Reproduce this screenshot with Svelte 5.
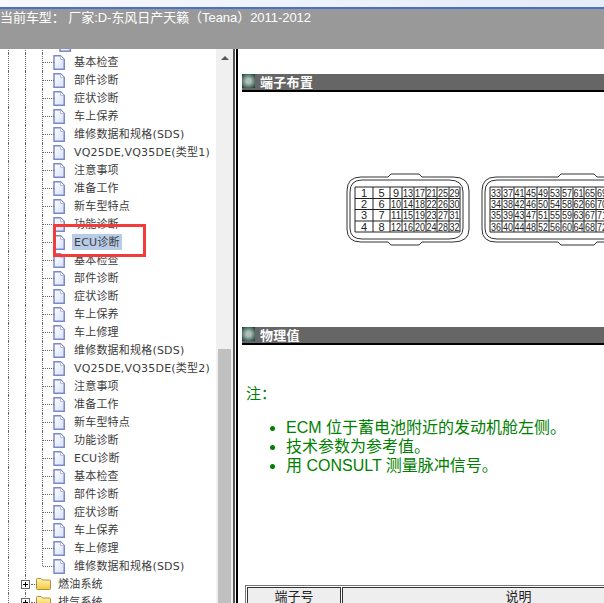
<script lang="ts">
	// one service-manual tree, scrolled part way down
	const section = ['注意事项', '准备工作', '新车型特点', '功能诊断', 'ECU诊断', '基本检查', '部件诊断', '症状诊断', '车上保养'];
	const docs = [
		'基本检查', '部件诊断', '症状诊断', '车上保养', '维修数据和规格(SDS)',
		'VQ25DE,VQ35DE(类型1)',
		...section,
		'车上修理', '维修数据和规格(SDS)',
		'VQ25DE,VQ35DE(类型2)',
		...section,
		'车上修理', '维修数据和规格(SDS)'
	];
	const selected = 10;
	const folders = ['燃油系统', '排气系统'];

	const cols1 = [355, 373, 390, 402, 414, 426, 437, 449, 460];
	const cols2 = [490, 502, 514, 525, 537, 549, 561, 573, 584, 596, 608];
	const rowY = [187, 198.5, 209.5, 221, 232];

	function pin(col: number, row: number, first: number) {
		return first + col * 4 + row;
	}
</script>

{#snippet page()}
	<svg class="page" viewBox="0 0 12 15">
		<path d="M1 .75h6.500l3.750 3.750v9.750h-10.250z" fill="url(#page-fill)" stroke="#7c88c8" stroke-width="1.500" />
		<path d="M7.500 1v3.500h3.500" fill="#fff" stroke="#a8b0dc" stroke-width="0.800" />
	</svg>
{/snippet}

<div class="window">
	<svg class="defs" width="0" height="0">
		<defs>
			<linearGradient id="page-fill" x1="0" y1="0" x2="1" y2="1">
				<stop offset="0" stop-color="#ffffff" />
				<stop offset="1" stop-color="#d4e0fa" />
			</linearGradient>
			<linearGradient id="folder-fill" x1="0" y1="0" x2="0" y2="1">
				<stop offset="0" stop-color="#fff6b8" />
				<stop offset="1" stop-color="#f4c83c" />
			</linearGradient>
		</defs>
	</svg>
	<div class="title-strip"></div>
	<div class="car-bar">当前车型： 厂家:D-东风日产天籁（Teana）2011-2012</div>

	<div class="main">
		<div class="tree-pane">
			<div class="tree">
				<div class="row doc">
					<span class="guide"></span><span class="guide"></span><span class="guide"></span>
					{@render page()}
				</div>
				{#each docs as label, i}
					<div class="row doc">
						<span class="guide"></span>
						<span class="guide"></span>
						<span class="guide branch" class:last={i === docs.length - 1}></span>
						{@render page()}
						<span class="label" class:selected={i === selected}>{label}</span>
					</div>
				{/each}
				{#each folders as label}
					<div class="row folder">
						<span class="guide"></span>
						<span class="guide plus-cell">
							<span class="plus"></span>
						</span>
						<svg class="folder-icon" viewBox="0 0 15 12">
							<path d="M.5 10.500v-9q0-1 1-1h3.500l1.500 1.500h7q1 0 1 1v7.500q0 1-1 1h-12q-1 0-1-1z" fill="url(#folder-fill)" stroke="#b09038" />
						</svg>
						<span class="label">{label}</span>
					</div>
				{/each}
			</div>
			<div class="marker"></div>
			<div class="scrollbar">
				<span class="arrow"></span>
				<div class="thumb"></div>
			</div>
		</div>

		<div class="divider"></div>

		<div class="content">
			<div class="heading first">
				<span class="bulb"></span>端子布置
			</div>

			<div class="connectors">
				<svg width="367" height="80" viewBox="341 170 367 80">
					<g fill="none" stroke="#333" stroke-width="1">
						<path d="M361 177h27l3-3h28l3 3h31q16 0 16 14v38q0 13-16 13h-31l-3 3h-28l-3-3h-27q-14 0-14-13v-38q0-14 14-14z" />
						<path d="M362 180h87q14 0 14 12v36q0 11-14 11h-87q-12 0-12-11v-36q0-12 12-12z" />
						<path d="M496 177h62l3-3h33l3 3h20v65h-20l-3 3h-33l-3-3h-62q-14 0-14-13v-38q0-14 14-14z" />
						<path d="M497 180h120v59h-120q-12 0-12-11v-36q0-12 12-12z" />
					</g>
					{#each [cols1, cols2] as cols, c}
						<g stroke="#222" stroke-width="1">
							{#each cols as x}<line x1={x} x2={x} y1="187" y2="232" />{/each}
							{#each rowY as y}<line x1={cols[0]} x2={cols[cols.length - 1]} y1={y} y2={y} />{/each}
						</g>
						{#each cols.slice(0, -1) as x, col}
							{#each rowY.slice(0, -1) as y, row}
								{@const n = pin(col, row, c === 0 ? 1 : 33)}
								<text
									class="pin"
									x={(x + cols[col + 1]) / 2}
									y={y + 9.500}
									textLength={n > 9 ? 10 : undefined}
									lengthAdjust="spacingAndGlyphs"
								>{n}</text>
							{/each}
						{/each}
					{/each}
				</svg>
			</div>

			<div class="heading">
				<span class="bulb"></span>物理值
			</div>

			<p class="note">注：</p>
			<ul class="notes">
				<li>ECM 位于蓄电池附近的发动机舱左侧。</li>
				<li>技术参数为参考值。</li>
				<li>用 CONSULT 测量脉冲信号。</li>
			</ul>

			<table class="pins">
				<thead>
					<tr><th class="no">端子号</th><th class="desc">说明</th></tr>
				</thead>
			</table>
		</div>
	</div>
</div>

<style>
	:global(body) {
		margin: 0;
		overflow: hidden;
	}

	.window {
		position: relative;
		width: 604px;
		height: 603px;
		display: flex;
		flex-direction: column;
		overflow: hidden;
		background: #fff;
		font-family: 'Liberation Sans', 'Noto Sans CJK SC', sans-serif;
	}

	.defs {
		position: absolute;
	}

	.title-strip {
		height: 7px;
		flex-shrink: 0;
		background: linear-gradient(90deg, #f8f8fc, #e4ecf8);
		border-bottom: 2px solid #4a70c8;
	}

	.car-bar {
		height: 40px;
		flex-shrink: 0;
		background: #999;
		color: #fff;
		font-size: 13px;
		line-height: 18px;
		letter-spacing: -0.05px;
		white-space: nowrap;
	}

	.main {
		flex: 1;
		display: flex;
		min-height: 0;
	}

	.tree-pane {
		position: relative;
		width: 233px;
		flex-shrink: 0;
		display: flex;
		overflow: hidden;
	}

	.tree {
		flex: 1;
		margin-top: -14px;
		min-width: 0;
	}

	.row {
		height: 18px;
		display: flex;
		align-items: center;
		white-space: nowrap;
	}

	.guide {
		align-self: stretch;
		width: 17px;
		box-sizing: border-box;
		border-left: 1px dotted #666;
		flex-shrink: 0;
	}

	.guide:first-child {
		margin-left: 8px;
	}

	.guide.branch {
		width: 11px;
		position: relative;
	}

	.guide.branch::after {
		content: '';
		position: absolute;
		left: 0;
		top: 9px;
		width: 11px;
		border-top: 1px dotted #666;
	}

	/* last child: the vertical line stops at the branch */
	.guide.last {
		border-left-color: transparent;
	}

	.guide.last::before {
		content: '';
		position: absolute;
		left: -1px;
		top: 0;
		height: 9px;
		border-left: 1px dotted #666;
	}

	.page {
		width: 12px;
		height: 15px;
		flex-shrink: 0;
	}

	.label {
		margin-left: 8px;
		padding: 1px 1px 0;
		color: #3c3c3c;
		font-size: 11px;
		line-height: 15px;
		letter-spacing: 0.2px;
		font-family: 'DejaVu Sans', 'Noto Sans CJK SC', sans-serif;
	}

	.label.selected {
		background: #b8cce8;
		padding: 1px 2px 0;
		margin-left: 7px;
	}

	.folder .label {
		margin-left: 6px;
	}

	.plus-cell {
		position: relative;
		display: flex;
		align-items: center;
		width: 11px;
	}

	.plus-cell::after {
		content: '';
		position: absolute;
		left: 5px;
		top: 9px;
		width: 6px;
		border-top: 1px dotted #666;
	}

	.plus {
		position: relative;
		z-index: 1;
		width: 9px;
		height: 9px;
		box-sizing: border-box;
		margin-left: -5px;
		border: 1px solid #666;
		background:
			linear-gradient(#000 0 0) center / 5px 1px no-repeat,
			linear-gradient(#000 0 0) center / 1px 5px no-repeat,
			#fff;
	}

	.folder-icon {
		width: 15px;
		height: 12px;
		flex-shrink: 0;
	}

	.marker {
		position: absolute;
		left: 53px;
		top: 175px;
		width: 93px;
		height: 33px;
		box-sizing: border-box;
		border: 3px solid #f33b3b;
	}

	.scrollbar {
		width: 17px;
		flex-shrink: 0;
		background: #f0f0f0;
		display: flex;
		flex-direction: column;
		align-items: center;
	}

	.arrow {
		margin-top: 7px;
		border: 4px solid transparent;
		border-top: 0;
		border-bottom: 4px solid #555;
	}

	.thumb {
		width: 13px;
		margin-top: 289px;
		flex: 1;
		background: #c0c0c0;
	}

	.divider {
		width: 2px;
		flex-shrink: 0;
		margin-right: 1px;
		background: #555;
		box-shadow: 3px 0 0 #000;
	}

	.content {
		flex: 1;
		min-width: 0;
		overflow: hidden;
		margin-left: 2px;
		padding-left: 4px;
	}

	.heading {
		height: 16px;
		display: flex;
		align-items: flex-start;
		gap: 5px;
		background: #666;
		border-bottom: 2px solid #000;
		color: #fff;
		font-size: 13px;
		font-weight: 700;
		letter-spacing: 0.3px;
		line-height: 15px;
		font-family: 'Noto Sans CJK SC', sans-serif;
	}

	.heading.first {
		margin-top: 25px;
	}

	.bulb {
		width: 13px;
		height: 14px;
		flex-shrink: 0;
		background: radial-gradient(circle, #b4bcb8 0 25%, #5c8278 60%, #16302c 100%);
	}

	.connectors {
		height: 235px;
		padding-top: 78px;
		box-sizing: border-box;
		margin-left: 99px;
	}

	.connectors svg {
		display: block;
	}

	.pin {
		font-size: 11px;
		fill: #222;
		text-anchor: middle;
		font-family: 'Liberation Sans', sans-serif;
	}

	.note {
		margin: 38px 0 0 4px;
		color: #008000;
		font-size: 15px;
		line-height: 20px;
		font-family: 'Noto Sans CJK SC', sans-serif;
	}

	.notes {
		margin: 15px 0 0;
		padding: 0 0 0 44px;
		color: #008000;
		font-size: 16px;
		line-height: 19px;
		white-space: nowrap;
	}

	.pins {
		width: 452px;
		margin: 110px 0 0 3px;
		border-collapse: separate;
		border-spacing: 1px;
		border: 1px solid #777;
		table-layout: fixed;
	}

	.pins th {
		background: #eee;
		border: 1px solid #333;
		border-bottom: 0;
		color: #222;
		font-size: 13px;
		font-weight: 400;
		line-height: 16px;
		padding: 0;
		font-family: 'Noto Sans CJK SC', sans-serif;
	}

	.pins .no {
		width: 92px;
	}
</style>
